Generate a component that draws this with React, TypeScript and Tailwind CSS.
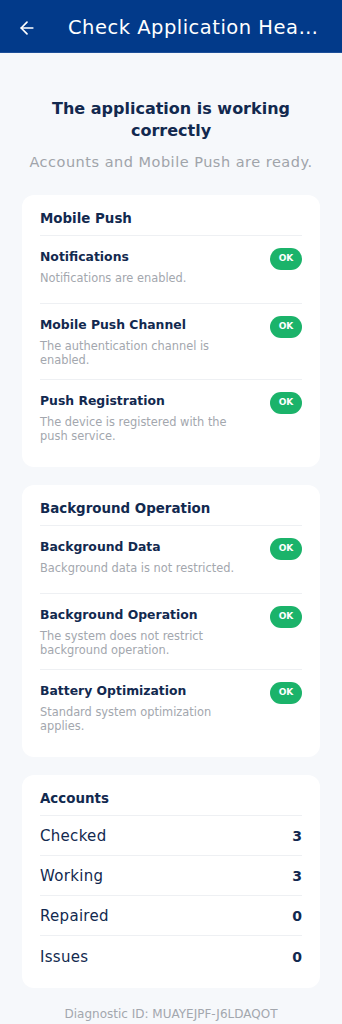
import React from 'react';
import { ArrowLeft } from 'lucide-react';

const font = { fontFamily: '"DejaVu Sans", "Open Sans", sans-serif' };

const pushChecks = [
  { title: 'Notifications', text: 'Notifications are enabled.' },
  { title: 'Mobile Push Channel', text: 'The authentication channel is enabled.' },
  { title: 'Push Registration', text: 'The device is registered with the push service.' },
];

const backgroundChecks = [
  { title: 'Background Data', text: 'Background data is not restricted.' },
  { title: 'Background Operation', text: 'The system does not restrict background operation.' },
  { title: 'Battery Optimization', text: 'Standard system optimization applies.' },
];

const accounts = [
  { label: 'Checked', value: 3 },
  { label: 'Working', value: 3 },
  { label: 'Repaired', value: 0 },
  { label: 'Issues', value: 0 },
];

const OkBadge = () => (
  <div className="flex h-[22px] w-[32px] shrink-0 items-center justify-center rounded-full bg-[#1bb36a] text-[9px] font-bold text-white">
    OK
  </div>
);

const CheckRow = ({ title, text, last }) => (
  <div className={`flex min-h-[68px] items-start justify-between pt-[12px] pb-[12px] ${last ? '' : 'border-b border-[#eef0f3]'}`}>
    <div className="w-[196px]">
      <div className="text-[12.4px] leading-[18px] font-bold text-[#12294f]">{title}</div>
      <div className="mt-[5px] text-[11.4px] leading-[14px] text-[#a3a7ae]">{text}</div>
    </div>
    <div>
      <OkBadge />
    </div>
  </div>
);

const Card = ({ title, children }) => (
  <div className="rounded-[12px] bg-white px-[18px] pb-[12px]">
    <div className="border-b border-[#eef0f3] pt-[15px] pb-[7px] text-[13.4px] leading-[18px] font-bold text-[#12294f]">
      {title}
    </div>
    {children}
  </div>
);

export default function App() {
  return (
    <div className="min-h-[1024px] w-[342px] bg-[#f6f8fb]" style={font}>
      <div className="flex h-[52px] items-center bg-[#023a8a] pt-[4px] pl-[17px] pr-[20px] shadow-[0_1px_0_#1d4f99]">
        <ArrowLeft size={20} strokeWidth={2} className="shrink-0 text-white" />
        <div className="ml-[31px] truncate text-[19.5px] tracking-[0.5px] text-white">Check Application Health</div>
      </div>

      <div className="px-[10px] pt-[46px] text-center">
        <div className="mx-auto w-[260px] text-[16px] leading-[22px] font-bold text-[#12294f]">
          The application is working correctly
        </div>
        <div className="mt-[10px] text-[14.5px] leading-[20px] tracking-[0.5px] text-[#a0a4aa]">
          Accounts and Mobile Push are ready.
        </div>
      </div>

      <div className="flex flex-col gap-[18px] px-[22px] pt-[23px]">
        <Card title="Mobile Push">
          {pushChecks.map((c, i) => (
            <CheckRow key={c.title} {...c} last={i === pushChecks.length - 1} />
          ))}
        </Card>

        <Card title="Background Operation">
          {backgroundChecks.map((c, i) => (
            <CheckRow key={c.title} {...c} last={i === backgroundChecks.length - 1} />
          ))}
        </Card>

        <Card title="Accounts">
          {accounts.map((a, i) => (
            <div
              key={a.label}
              className={`flex h-[40px] items-center justify-between pt-[2px] ${i === accounts.length - 1 ? '' : 'border-b border-[#eef0f3]'}`}
            >
              <span className="text-[15px] tracking-[0.3px] text-[#12294f]">{a.label}</span>
              <span className="text-[14px] font-bold text-[#12294f]">{a.value}</span>
            </div>
          ))}
        </Card>
      </div>

      <div className="pt-[17px] pb-[4px] text-center text-[12px] text-[#a3a7ae]">Diagnostic ID: MUAYEJPF-J6LDAQOT</div>
    </div>
  );
}
